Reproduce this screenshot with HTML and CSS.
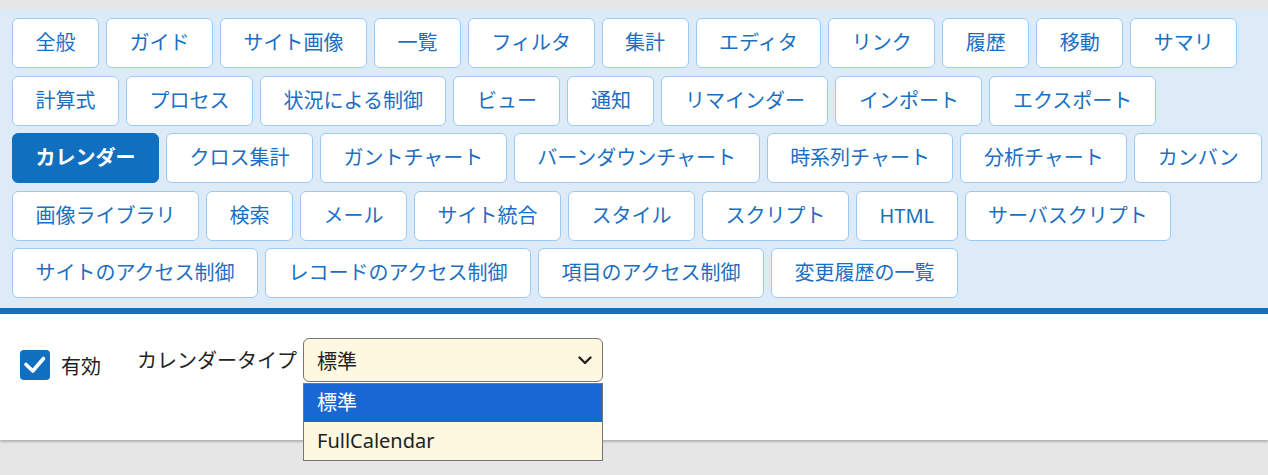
FILE: index.html
```html
<!DOCTYPE html>
<html lang="ja">
<head>
  <meta charset="UTF-8" />
  <meta name="viewport" content="width=device-width, initial-scale=1.0"/>
  <title>サイトの管理 - カレンダー</title>
  <link rel="stylesheet" href="styles.css">
</head>
<body>

  <div class="editor">
    <nav class="tab-list">
      <a class="tab">全般</a>
      <a class="tab">ガイド</a>
      <a class="tab">サイト画像</a>
      <a class="tab">一覧</a>
      <a class="tab">フィルタ</a>
      <a class="tab">集計</a>
      <a class="tab">エディタ</a>
      <a class="tab">リンク</a>
      <a class="tab">履歴</a>
      <a class="tab">移動</a>
      <a class="tab">サマリ</a>
      <a class="tab">計算式</a>
      <a class="tab">プロセス</a>
      <a class="tab">状況による制御</a>
      <a class="tab">ビュー</a>
      <a class="tab">通知</a>
      <a class="tab">リマインダー</a>
      <a class="tab">インポート</a>
      <a class="tab">エクスポート</a>
      <a class="tab active">カレンダー</a>
      <a class="tab">クロス集計</a>
      <a class="tab">ガントチャート</a>
      <a class="tab">バーンダウンチャート</a>
      <a class="tab">時系列チャート</a>
      <a class="tab">分析チャート</a>
      <a class="tab">カンバン</a>
      <a class="tab">画像ライブラリ</a>
      <a class="tab">検索</a>
      <a class="tab">メール</a>
      <a class="tab">サイト統合</a>
      <a class="tab">スタイル</a>
      <a class="tab">スクリプト</a>
      <a class="tab">HTML</a>
      <a class="tab">サーバスクリプト</a>
      <a class="tab">サイトのアクセス制御</a>
      <a class="tab">レコードのアクセス制御</a>
      <a class="tab">項目のアクセス制御</a>
      <a class="tab">変更履歴の一覧</a>
    </nav>

    <div class="tab-body">
      <label class="check-field">
        <span class="check-box">
          <svg width="30" height="30" viewBox="0 0 30 30">
            <path d="M6 14.5 L12.8 21 L23.5 8.5" fill="none" stroke="#fff" stroke-width="3.6" stroke-linecap="round" stroke-linejoin="round"/>
          </svg>
        </span>
        <span>有効</span>
      </label>

      <span class="field-label">カレンダータイプ</span>

      <div class="select-wrap">
        <div class="select-box">
          <span>標準</span>
          <svg class="select-arrow" width="14" height="9" viewBox="0 0 14 9">
            <path d="M1.5 1.5 L7 7 L12.5 1.5" fill="none" stroke="#222" stroke-width="2.4" stroke-linecap="round" stroke-linejoin="round"/>
          </svg>
        </div>
        <ul class="select-menu">
          <li class="selected">標準</li>
          <li>FullCalendar</li>
        </ul>
      </div>
    </div>
  </div>

</body>
</html>
```

FILE: styles.css
```css
body {
  margin: 0;
  padding-top: 9px;
  min-height: 100vh;
  box-sizing: border-box;
  background: #e6e6e6;
  font-family: "Noto Sans", "Noto Sans CJK JP", sans-serif;
  font-size: 20px;
}

.editor {
  background: white;
  box-shadow: 0 2px 2px rgba(0,0,0,0.22);
}

/* tabs */
.tab-list {
  display: flex;
  flex-wrap: wrap;
  gap: 7.5px 7px;
  padding: 9px 2px 10px 12px;
  background: #ddeaf7;
  border-bottom: 6px solid #116fbf;
}

.tab {
  display: block;
  height: 28px;
  line-height: 28px;
  padding: 10px 22.5px;
  background: white;
  border: 1px solid #99cbf7;
  border-radius: 6px;
  color: #1a6fc2;
  white-space: nowrap;
  cursor: pointer;
}

.tab.active {
  background: #116fbf;
  border-color: #116fbf;
  color: white;
  font-weight: bold;
}

/* form */
.tab-body {
  display: flex;
  align-items: flex-start;
  height: 126px;
  box-sizing: border-box;
  padding: 24px 20px 0;
  color: #222;
}

.check-field {
  display: flex;
  align-items: center;
  gap: 11px;
  margin-top: 12px;
  cursor: pointer;
}

.check-box {
  display: block;
  width: 30px;
  height: 30px;
  background: #116fbf;
  border-radius: 4px;
}

.check-box svg {
  display: block;
}

.field-label {
  margin-left: 36px;
  margin-top: 8px;
  line-height: 30px;
}

.select-wrap {
  position: relative;
  margin-left: 6px;
}

.select-box {
  display: flex;
  align-items: center;
  justify-content: space-between;
  width: 300px;
  height: 44px;
  box-sizing: border-box;
  padding: 0 10px 0 13px;
  background: #fff8e1;
  border: 1px solid #767676;
  border-radius: 6px;
}

.select-arrow {
  display: block;
}

.select-menu {
  position: absolute;
  top: 45px;
  left: 0;
  width: 300px;
  box-sizing: border-box;
  margin: 0;
  padding: 0;
  list-style: none;
  background: #fff8e1;
  border: 1px solid #767676;
}

.select-menu li {
  height: 38px;
  line-height: 38px;
  padding-left: 13px;
}

.select-menu li.selected {
  background: #1967d2;
  color: white;
}
```
